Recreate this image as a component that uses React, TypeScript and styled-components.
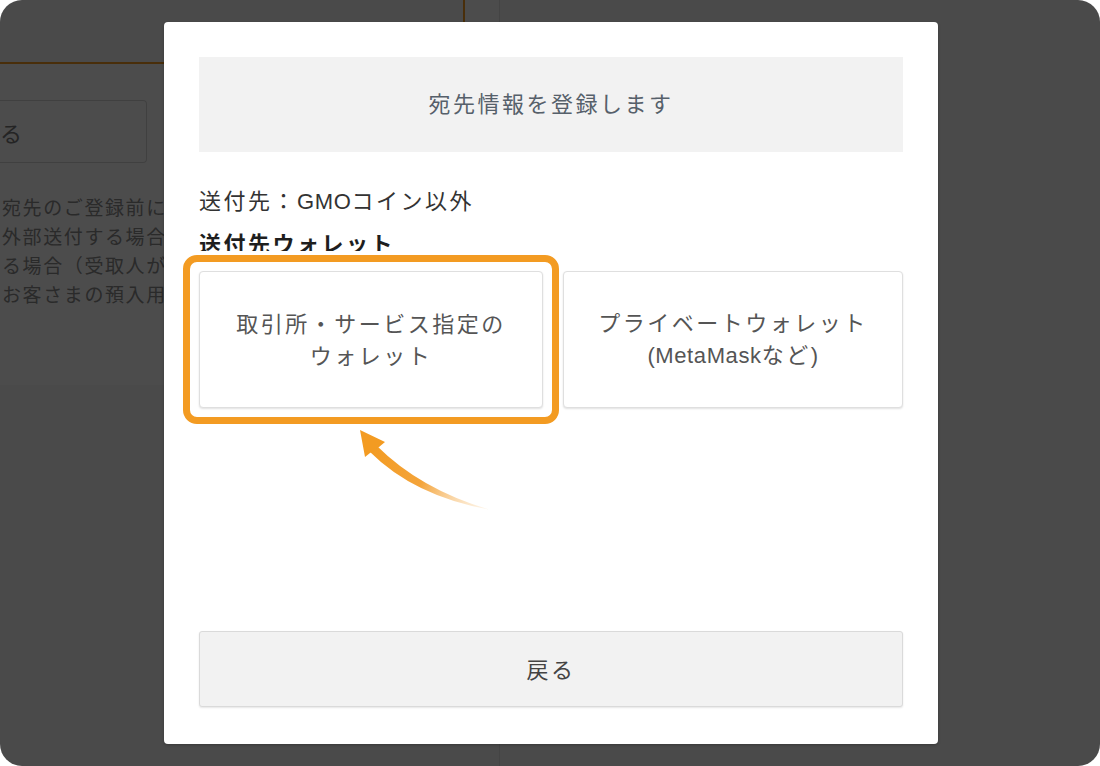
import React from "react";
import styled, {createGlobalStyle} from "styled-components";

const GlobalStyle = createGlobalStyle`
  html, body {
    margin: 0;
    padding: 0;
    background: #ffffff;
  }
  body {
    font-family: "Noto Sans CJK JP", "Noto Sans", sans-serif;
  }
  * { box-sizing: border-box; }
`;

const ORANGE = "#f39b22";

const Frame = styled.div`
  position: relative;
  width: 1100px;
  height: 766px;
  border-radius: 22px;
  overflow: hidden;
  background: #f7f7f7;
`;

/* page behind the dialog */
const Page = styled.div`
  display: flex;
  height: 100%;
`;

const LeftPane = styled.div`
  width: 500px;
  display: flex;
  flex-direction: column;
  border-right: 1px solid #e4e4e4;
`;

const TabBar = styled.div`
  height: 64px;
  display: flex;
`;

const Tab = styled.div`
  width: 465px;
  border-right: 2px solid ${ORANGE};
  border-bottom: 2px solid ${ORANGE};
`;

const TabRest = styled.div`
  flex: 1;
  background: #ffffff;
`;

const PaneBody = styled.div`
  height: 321px;
  background: #ffffff;
  padding-top: 36px;
`;

const GhostButton = styled.div`
  width: 147px;
  height: 63px;
  display: flex;
  align-items: center;
  border: 1px solid #d8d8d8;
  border-left: none;
  border-radius: 0 4px 4px 0;
  background: #fdfdfd;
  color: #7a7a7a;
  font-size: 22px;
`;

const Notice = styled.p`
  margin: 29px 0 0 2px;
  font-size: 19px;
  line-height: 29px;
  letter-spacing: 1.6px;
  color: #8c8c8c;
  white-space: nowrap;
`;

const Backdrop = styled.div`
  position: absolute;
  inset: 0;
  background: rgba(0, 0, 0, 0.7);
  display: flex;
  align-items: center;
  justify-content: center;
  padding-left: 2px;
`;

/* dialog */
const Modal = styled.div`
  position: relative;
  width: 774px;
  height: 722px;
  padding: 35px 35px 37px;
  background: #ffffff;
  border-radius: 4px;
  box-shadow: 0 1px 3px rgba(0, 0, 0, 0.25);
  display: flex;
  flex-direction: column;
`;

const Header = styled.div`
  height: 95px;
  padding-bottom: 5px;
  background: #f2f2f2;
  display: flex;
  align-items: center;
  justify-content: center;
  font-size: 22px;
  letter-spacing: 2.5px;
  color: #56606a;
`;

const Info = styled.div`
  margin-top: 27px;
  font-size: 22px;
  line-height: 41px;
  letter-spacing: 2.5px;
`;

const InfoLine = styled.div<{ $bold?: boolean }>`
  color: ${p => (p.$bold ? "#1e1e1e" : "#333333")};
  font-weight: ${p => (p.$bold ? 700 : 400)};
`;

const Latin = styled.span`
  font-family: "Liberation Sans", Arial, sans-serif;
  letter-spacing: 0.6px;
`;

const Choices = styled.div`
  margin-top: 8px;
  display: grid;
  grid-template-columns: 344px 1fr;
  gap: 20px;
`;

const Choice = styled.button`
  position: relative;
  height: 137px;
  margin: 0;
  padding: 0 0 3px;
  border: 1px solid #dfdfdf;
  border-radius: 4px;
  background: #ffffff;
  box-shadow: 0 1px 2px rgba(0, 0, 0, 0.12);
  font-family: inherit;
  font-size: 22px;
  line-height: 32px;
  letter-spacing: 2.5px;
  color: #555555;
  text-align: center;
  cursor: pointer;
`;

const Highlight = styled.span`
  position: absolute;
  inset: -17px;
  border: 7px solid ${ORANGE};
  border-radius: 14px;
  box-shadow: 0 0 0 4px #ffffff;
  pointer-events: none;
`;

const Arrow = styled.svg`
  position: absolute;
  left: 190px;
  top: 405px;
  width: 145px;
  height: 92px;
  overflow: visible;
`;

const BackButton = styled.button`
  margin-top: auto;
  height: 76px;
  padding: 0 0 3px;
  border: 1px solid #dadada;
  border-radius: 3px;
  background: #f2f2f2;
  box-shadow: 0 1px 2px rgba(0, 0, 0, 0.1);
  font-family: inherit;
  font-size: 22px;
  letter-spacing: 2.5px;
  color: #444444;
  cursor: pointer;
`;

const CurvedArrow = () => (
  <Arrow viewBox="0 0 145 92">
    <defs>
      <linearGradient id="tail" gradientUnits="userSpaceOnUse" x1="18" y1="20" x2="136" y2="83">
        <stop offset="0" stopColor={ORANGE} />
        <stop offset="0.45" stopColor="#f4a43a" />
        <stop offset="1" stopColor="#fbe2c0" stopOpacity="0.3" />
      </linearGradient>
    </defs>
    <path d="M22.5 18.5 Q66 62 135 82.5 Q60 69 15.5 24.5 Z" fill="url(#tail)" />
    <polygon points="6,3 31,15 25,20 16,26 11,30" fill={ORANGE} />
  </Arrow>
);

export default function App() {
  return (
    <>
      <GlobalStyle />
      <Frame>
        <Page>
          <LeftPane>
            <TabBar>
              <Tab />
              <TabRest />
            </TabBar>
            <PaneBody>
              <GhostButton>る</GhostButton>
              <Notice>
                宛先のご登録前に<br />
                外部送付する場合<br />
                る場合（受取人が<br />
                お客さまの預入用
              </Notice>
            </PaneBody>
          </LeftPane>
        </Page>
        <Backdrop>
          <Modal>
            <Header>宛先情報を登録します</Header>
            <Info>
              <InfoLine>送付先：<Latin>GMO</Latin>コイン以外</InfoLine>
              <InfoLine $bold>送付先ウォレット</InfoLine>
            </Info>
            <Choices>
              <Choice>
                取引所・サービス指定の<br />ウォレット
                <Highlight />
              </Choice>
              <Choice>
                プライベートウォレット<br /><Latin>(MetaMask</Latin>など<Latin>)</Latin>
              </Choice>
            </Choices>
            <CurvedArrow />
            <BackButton>戻る</BackButton>
          </Modal>
        </Backdrop>
      </Frame>
    </>
  );
}
